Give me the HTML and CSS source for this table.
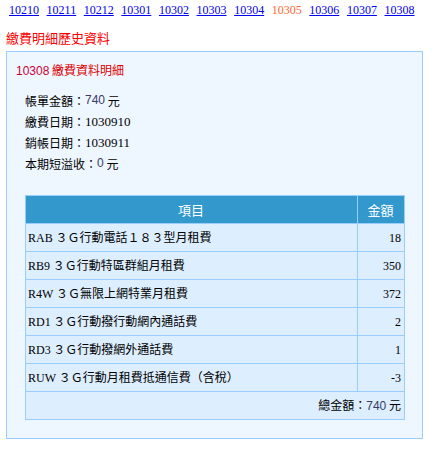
FILE: index.html
```html
<!DOCTYPE html>
<html lang="zh-Hant">
<head>
<meta charset="utf-8">
<title>繳費明細歷史資料</title>
<link rel="stylesheet" href="styles.css">
</head>
<body>
<nav class="months">
  <a href="#">10210</a><a href="#">10211</a><a href="#">10212</a><a href="#">10301</a><a href="#">10302</a><a href="#">10303</a><a href="#">10304</a><span class="current">10305</span><a href="#">10306</a><a href="#">10307</a><a href="#">10308</a>
</nav>
<h1 class="page-title">繳費明細歷史資料</h1>
<section class="panel">
  <h2 class="panel-title"><span class="num">10308</span> 繳費資料明細</h2>
  <ul class="summary">
    <li>帳單金額：<span class="amt">740</span> 元</li>
    <li>繳費日期：<span class="date">1030910</span></li>
    <li>銷帳日期：<span class="date">1030911</span></li>
    <li>本期短溢收：<span class="amt">0</span> 元</li>
  </ul>
  <table class="items">
    <thead>
      <tr><th class="col-item">項目</th><th class="col-amt">金額</th></tr>
    </thead>
    <tbody>
      <tr><td><span class="code">RAB</span> ３Ｇ行動電話１８３型月租費</td><td class="n">18</td></tr>
      <tr><td><span class="code">RB9</span> ３Ｇ行動特區群組月租費</td><td class="n">350</td></tr>
      <tr><td><span class="code">R4W</span> ３Ｇ無限上網特業月租費</td><td class="n">372</td></tr>
      <tr><td><span class="code">RD1</span> ３Ｇ行動撥行動網內通話費</td><td class="n">2</td></tr>
      <tr><td><span class="code">RD3</span> ３Ｇ行動撥網外通話費</td><td class="n">1</td></tr>
      <tr><td><span class="code">RUW</span> ３Ｇ行動月租費抵通信費（含稅）</td><td class="n">-3</td></tr>
      <tr><td class="total" colspan="2">總金額：<span class="amt">740</span> 元</td></tr>
    </tbody>
  </table>
</section>
</body>
</html>
```
FILE: styles.css
```css
html, body {
  margin: 0;
  padding: 0;
  background: #fff;
}
body {
  font-family: "Liberation Serif", "Noto Sans CJK TC", serif;
  font-size: 12px;
  color: #000;
}
.months {
  display: flex;
  gap: 7.6px;
  padding: 2px 0 0 9px;
  line-height: 16px;
  font-size: 12px;
}
.months a {
  color: #0000ee;
  text-decoration: underline;
}
.months .current {
  color: #ff6633;
}
.page-title {
  margin: 11px 0 0 6px;
  font-family: "Noto Sans CJK TC", sans-serif;
  font-weight: normal;
  font-size: 13px;
  line-height: 18px;
  color: #ff0000;
}
.panel {
  margin: 4px 0 0 6px;
  width: 379px;
  padding: 10px 18px 18px 18px;
  background: #eef6ff;
  border: 1px solid #99ccff;
}
.panel-title {
  margin: 0 0 0 -9px;
  font-family: "Noto Sans CJK TC", sans-serif;
  font-weight: normal;
  font-size: 12px;
  line-height: 16px;
  color: #dd0000;
}
.panel-title .num {
  font-family: "Liberation Sans", sans-serif;
  color: #cc0033;
}
.summary {
  list-style: none;
  margin: 11px 0 0 0;
  padding: 0;
  font-family: "Noto Sans CJK TC", sans-serif;
  font-size: 12px;
}
.summary li {
  display: flex;
  align-items: center;
  height: 21px;
  line-height: 21px;
  white-space: pre;
}
.summary .amt, .total .amt {
  font-family: "Liberation Sans", sans-serif;
  color: #3a3a66;
}
.summary .date {
  font-family: "Liberation Serif", serif;
  font-size: 13px;
}
.items {
  margin-top: 21px;
  width: 380px;
  border-collapse: collapse;
  font-family: "Noto Sans CJK TC", sans-serif;
  font-size: 12px;
}
.items th, .items td {
  border: 1px solid #99ccff;
  height: 27px;
  box-sizing: border-box;
  padding: 0 3px 0 2px;
  line-height: 16px;
}
.items tr {
  height: 28px;
}
.items th {
  background: #3399cc;
  color: #fff;
  font-weight: normal;
  font-size: 13px;
}
.items .col-amt {
  width: 47px;
}
.items td {
  background: #ddeeff;
}
.items .code {
  font-family: "Liberation Serif", serif;
  font-size: 12px;
}
.items td.n {
  text-align: right;
  font-family: "Liberation Serif", serif;
}
.items td.total {
  text-align: right;
}
```
